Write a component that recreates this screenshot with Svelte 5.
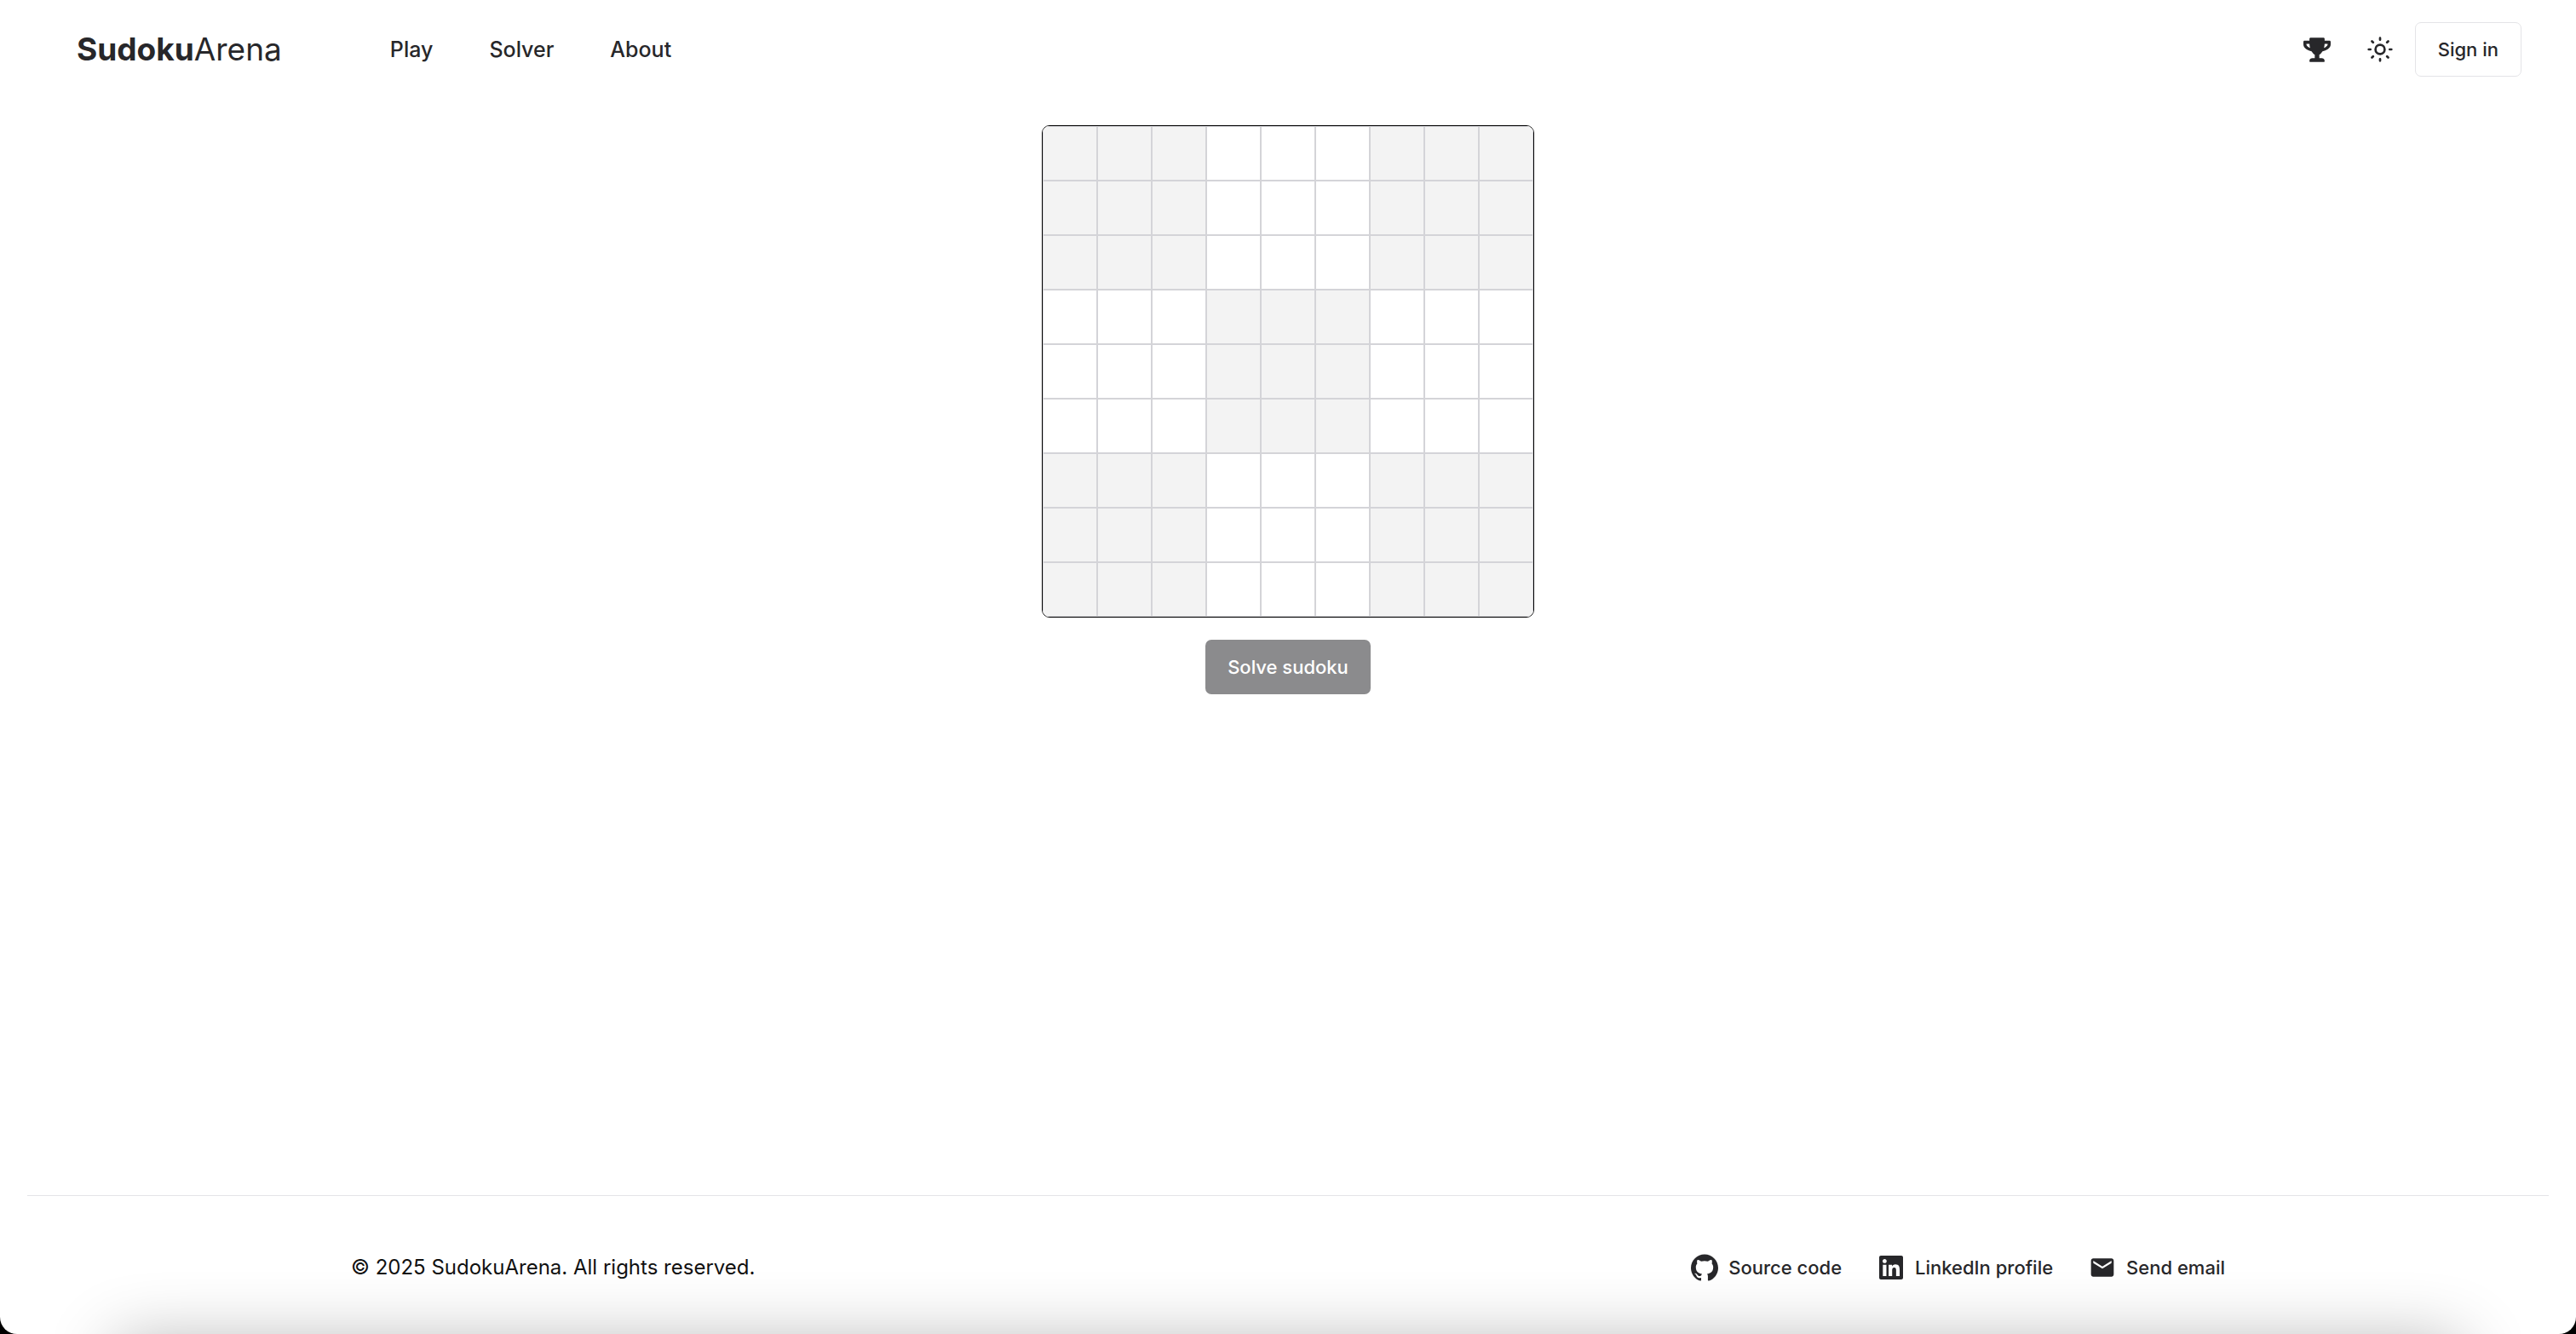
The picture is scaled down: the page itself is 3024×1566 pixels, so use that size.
<script>
  const cells = Array.from({ length: 81 }, (_, i) => {
    const row = Math.floor(i / 9);
    const col = i % 9;
    return {
      label: `Row ${row + 1}, column ${col + 1}`,
      shaded: (Math.floor(row / 3) + Math.floor(col / 3)) % 2 === 0
    };
  });
</script>

<div class="page">
  <header>
    <a class="logo" href="#home"><b>Sudoku</b>Arena</a>
    <nav>
      <a href="#play">Play</a>
      <a href="#solver">Solver</a>
      <a href="#about">About</a>
    </nav>
    <div class="actions">
      <button class="icon" aria-label="Leaderboard">
        <svg viewBox="0 0 576 512" width="32" height="29" fill="currentColor">
          <path d="M552 64H448V24c0-13.300-10.700-24-24-24H152c-13.300 0-24 10.700-24 24v40H24C10.700 64 0 74.700 0 88v56c0 35.700 22.500 72.400 61.900 100.700 31.500 22.700 69.800 37.100 110 41.700C203.300 338.500 240 360 240 360v72h-48c-35.300 0-64 20.700-64 56v12c0 6.600 5.400 12 12 12h296c6.600 0 12-5.400 12-12v-12c0-35.300-28.700-56-64-56h-48v-72s36.700-21.500 68.100-73.600c40.300-4.600 78.600-19 110-41.700 39.300-28.300 61.900-65 61.900-100.700V88c0-13.300-10.700-24-24-24zM99.300 192.800C74.900 175.200 64 155.600 64 144v-16h64.200c1 32.600 5.800 61.200 12.800 86.200-15.100-5.200-29.200-12.400-41.700-21.400zM512 144c0 16.100-17.700 36.100-35.300 48.800-12.500 9-26.700 16.200-41.800 21.400 7-25 11.800-53.600 12.800-86.200H512v16z"/>
        </svg>
      </button>
      <button class="icon" aria-label="Toggle theme">
        <svg viewBox="0 0 30 30" width="30" height="30" fill="none" stroke="currentColor" stroke-width="2.700" stroke-linecap="round">
          <circle cx="15" cy="15" r="5.400"/>
          <path d="M15 1.700v2M15 26.300v2M1.700 15h2M26.300 15h2M5.500 5.500l1.300 1.300M23.200 23.200l1.300 1.300M5.500 24.500l1.300-1.300M23.200 6.800l1.300-1.300"/>
        </svg>
      </button>
      <button class="signin">Sign in</button>
    </div>
  </header>

  <main>
    <div class="board">
      {#each cells as cell}
        <input class:shaded={cell.shaded} aria-label={cell.label} inputmode="numeric" maxlength="1" />
      {/each}
    </div>
    <button class="solve" disabled>Solve sudoku</button>
  </main>

  <footer>
    <div class="inner">
      <p>© 2025 SudokuArena. All rights reserved.</p>
      <ul>
        <li><a href="#source">
          <svg viewBox="0 0 24 24" width="32" height="32" fill="currentColor"><path d="M12 .297c-6.630 0-12 5.373-12 12 0 5.303 3.438 9.800 8.205 11.385.6.113.82-.258.82-.577 0-.285-.01-1.040-.015-2.040-3.338.724-4.042-1.610-4.042-1.610C4.422 18.070 3.633 17.700 3.633 17.700c-1.087-.744.084-.729.084-.729 1.205.084 1.838 1.236 1.838 1.236 1.070 1.835 2.809 1.305 3.495.998.108-.776.417-1.305.76-1.605-2.665-.3-5.466-1.332-5.466-5.930 0-1.310.465-2.380 1.235-3.220-.135-.303-.54-1.523.105-3.176 0 0 1.005-.322 3.300 1.230.96-.267 1.980-.399 3-.405 1.020.006 2.040.138 3 .405 2.280-1.552 3.285-1.230 3.285-1.230.645 1.653.24 2.873.12 3.176.765.840 1.230 1.910 1.230 3.220 0 4.610-2.805 5.625-5.475 5.920.42.360.81 1.096.81 2.220 0 1.606-.015 2.896-.015 3.286 0 .315.210.690.825.570C20.565 22.092 24 17.592 24 12.297c0-6.627-5.373-12-12-12"/></svg>
          Source code</a></li>
        <li><a href="#linkedin">
          <svg viewBox="-32 -32 512 512" width="32" height="32" fill="currentColor"><path d="M416 0H31.900C14.300 0 0 14.500 0 32.300v383.400C0 433.500 14.300 448 31.900 448H416c17.600 0 32-14.500 32-32.300V32.300C448 14.500 433.600 0 416 0zM135.400 384H69V170.200h66.500V384zm-33.200-243c-21.300 0-38.500-17.300-38.500-38.500S80.900 64 102.200 64c21.200 0 38.500 17.300 38.500 38.500 0 21.300-17.200 38.500-38.500 38.500zm282.100 243h-66.400V280c0-24.800-.5-56.700-34.500-56.700-34.600 0-39.900 27-39.900 54.900V384h-66.400V170.200h63.700v29.200h.9c8.900-16.800 30.600-34.500 62.900-34.500 67.200 0 79.700 44.300 79.700 101.900V384z"/></svg>
          LinkedIn profile</a></li>
        <li><a href="#email">
          <svg viewBox="0 0 24 24" width="32" height="32" fill="currentColor"><path d="M20 4H4c-1.100 0-2 .9-2 2v12c0 1.100.9 2 2 2h16c1.100 0 2-.9 2-2V6c0-1.100-.9-2-2-2zm0 4l-8 5-8-5V6l8 5 8-5v2z"/></svg>
          Send email</a></li>
      </ul>
    </div>
  </footer>
</div>

<style>
  :global(body) { background: #000; }
  .page {
    min-height: 100vh;
    box-sizing: border-box;
    display: flex;
    flex-direction: column;
    overflow: hidden;
    position: relative;
    background: #fff;
    border-radius: 0 0 20px 20px;
    font-family: Inter, "Noto Sans", sans-serif;
    font-size: 22px;
    line-height: 32px;
    color: #27272a;
  }
  a { color: inherit; text-decoration: none; }
  button { font: inherit; color: inherit; padding: 0; border: 0; background: none; }
  svg { display: block; flex: none; }
  header {
    display: flex;
    align-items: center;
    padding: 26px 64px 0 90px;
    height: 64px;
  }
  .logo { font-size: 37px; line-height: 48px; }
  .logo b { font-weight: 700; }
  nav { display: flex; gap: 66px; margin-left: 127px; font-size: 25px; }
  nav a { font-weight: 500; }
  .actions { display: flex; align-items: center; margin-left: auto; }
  .icon {
    width: 74px;
    height: 64px;
    display: flex;
    align-items: center;
    justify-content: center;
  }
  .signin {
    box-sizing: border-box;
    height: 64px;
    margin-left: 4px;
    padding: 0 26px;
    border: 1px solid #e4e4e7;
    border-radius: 7px;
    font-weight: 500;
  }
  main {
    flex: 1;
    display: flex;
    flex-direction: column;
    align-items: center;
    padding-top: 57px;
    gap: 26px;
  }
  .board {
    display: grid;
    grid-template-columns: repeat(9, 64px);
    grid-auto-rows: 64px;
    border: 1px solid #000;
    border-radius: 9px;
    overflow: hidden;
  }
  .board input {
    width: 64px;
    height: 64px;
    box-sizing: border-box;
    margin: 0;
    padding: 0;
    border: 1px solid #d4d4d8;
    border-radius: 0;
    background: #fff;
    font: inherit;
    text-align: center;
  }
  .board .shaded { background: #f3f3f3; }
  .solve {
    height: 64px;
    padding: 0 26px;
    border-radius: 7px;
    background: #8b8b8d;
    color: #fff;
    font-weight: 500;
  }
  footer {
    margin: 0 32px;
    border-top: 1px solid #e4e4e7;
  }
  .inner {
    display: flex;
    align-items: center;
    justify-content: space-between;
    padding: 68px 380px 62px;
  }
  p { margin: 0; font-size: 24px; color: #111; }
  ul { display: flex; gap: 42px; margin: 0; padding: 0; list-style: none; font-weight: 500; }
  li a { display: flex; align-items: center; gap: 12px; }
  .page::after {
    content: "";
    position: absolute;
    left: 136px;
    right: 136px;
    bottom: -210px;
    height: 200px;
    box-shadow: 0 0 80px rgba(0, 0, 0, 0.3);
    pointer-events: none;
  }
</style>
